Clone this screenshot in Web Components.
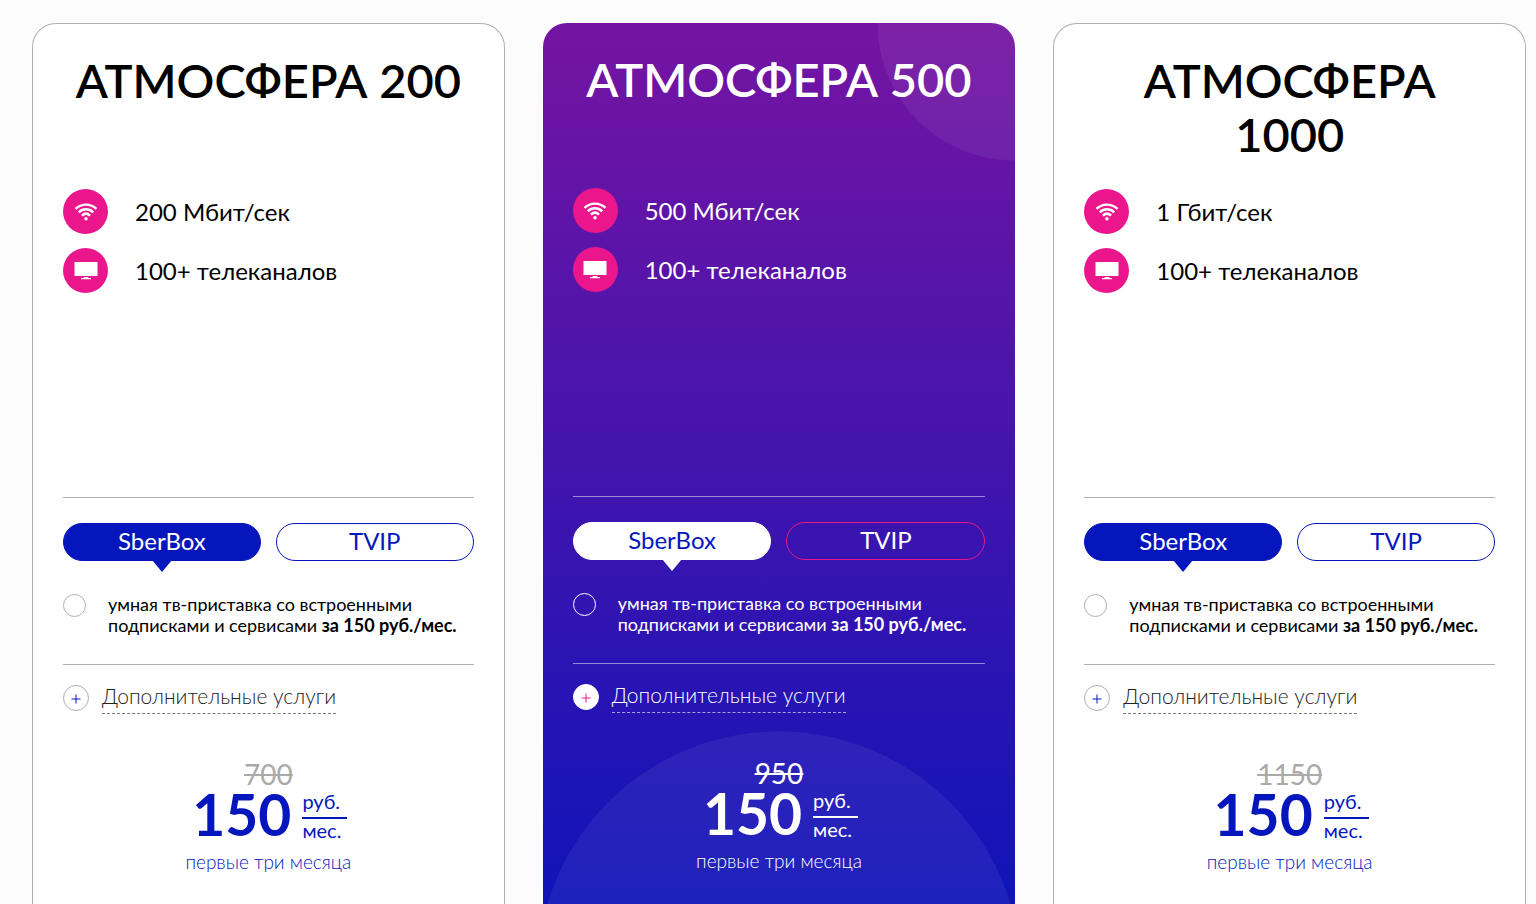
<!DOCTYPE html>
<html lang="ru">
<head>
<meta charset="utf-8">
<meta name="viewport" content="width=device-width, initial-scale=1">
<title>Тарифы «Атмосфера»</title>
<style>
  html { scrollbar-width: none; }
  body { margin: 0; background: #fcfcfc; font-family: Lato, "Open Sans", sans-serif; color: #000; }
</style>
</head>
<body>
<tariff-list>
  <tariff-card>
    <span slot="title">АТМОСФЕРА 200</span>
    <tariff-feature icon="wifi">200 Мбит/сек</tariff-feature>
    <tariff-feature icon="tv">100+ телеканалов</tariff-feature>
    <tariff-price slot="price" old="700" now="150">первые три месяца</tariff-price>
  </tariff-card>
  <tariff-card featured>
    <span slot="title">АТМОСФЕРА 500</span>
    <tariff-feature icon="wifi">500 Мбит/сек</tariff-feature>
    <tariff-feature icon="tv">100+ телеканалов</tariff-feature>
    <tariff-price slot="price" old="950" now="150">первые три месяца</tariff-price>
  </tariff-card>
  <tariff-card>
    <span slot="title">АТМОСФЕРА 1000</span>
    <tariff-feature icon="wifi">1 Гбит/сек</tariff-feature>
    <tariff-feature icon="tv">100+ телеканалов</tariff-feature>
    <tariff-price slot="price" old="1150" now="150">первые три месяца</tariff-price>
  </tariff-card>
</tariff-list>

<template id="list-template">
  <style>
    :host { display: block; }
    main {
      box-sizing: border-box;
      display: grid;
      grid-template-columns: repeat(auto-fit, minmax(440px, 1fr));
      gap: 38px;
      min-height: 100vh;
      padding: 23px 10px 0 32px;
    }
  </style>
  <main><slot></slot></main>
</template>

<template id="card-template">
  <style>
    :host {
      --accent: #0517bc;
      --line: #afafaf;
      --ring: #afafaf;
      --tab-text: #fff;
      --tab-idle-text: #0517bc;
      --tab-idle-line: #0517bc;
      --extra-text: #222;
      --extra-line: #777;
      --plus: #0517bc;
      --price: #0517bc;
      --old-price: #aaa;
      display: block;
      min-width: 0;
    }
    :host([featured]) {
      --accent: #fff;
      --line: rgba(255, 255, 255, .5);
      --ring: #fff;
      --tab-text: #0517bc;
      --tab-idle-text: #fff;
      --tab-idle-line: #eb168c;
      --extra-text: #fff;
      --extra-line: rgba(255, 255, 255, .6);
      --plus: #eb168c;
      --price: #fff;
      --old-price: #fff;
      color: #fff;
    }
    article {
      box-sizing: border-box;
      height: 100%;
      padding: 29px 30px 20px;
      border: 1px solid #afafaf;
      border-bottom: 0;
      border-radius: 24px 24px 0 0;
      background: #fff;
    }
    :host([featured]) article {
      border: 0;
      background:
        radial-gradient(circle 138px at 100% 0, rgba(255, 255, 255, .06) 137px, transparent 138px),
        radial-gradient(circle 242px at 50% calc(100% + 69px), rgba(255, 255, 255, .06) 241px, transparent 242px),
        linear-gradient(#7514a2, #0f14b9);
    }
    h2 {
      margin: 0;
      padding: 0 8px;
      min-height: 109px;
      font-size: 47px;
      line-height: 54px;
      font-weight: 600;
      text-align: center;
    }
    .features {
      display: flex;
      flex-direction: column;
      gap: 14px;
      min-height: 308px;
      margin-top: 27px;
    }
    hr { margin: 0; border: 0; height: 1px; background: var(--line); }
    .tabs { display: grid; grid-template-columns: 1fr 1fr; gap: 15px; margin-top: 25px; }
    .tabs button {
      position: relative;
      height: 38px;
      padding: 0 0 2px;
      border: 1px solid var(--tab-idle-line);
      border-radius: 19px;
      background: none;
      color: var(--tab-idle-text);
      font: 400 24px/34px Lato, "Open Sans", sans-serif;
      cursor: pointer;
    }
    .tabs button[aria-selected="true"] {
      border-color: var(--accent);
      background: var(--accent);
      color: var(--tab-text);
    }
    .tabs button[aria-selected="true"]::after {
      content: "";
      position: absolute;
      left: 50%;
      top: 100%;
      margin-left: -10px;
      border: 10px solid transparent;
      border-top: 12px solid var(--accent);
      border-bottom: 0;
    }
    .option { display: flex; align-items: flex-start; gap: 22px; margin: 33px 0 28px; }
    .option input {
      appearance: none;
      flex: none;
      box-sizing: border-box;
      width: 23px;
      height: 23px;
      margin: 0;
      border: 1px solid var(--ring);
      border-radius: 50%;
    }
    .option input:checked { background: var(--accent); }
    .option label { font-size: 18px; line-height: 21px; }
    .option b { font-weight: 700; }
    .extra {
      display: flex;
      gap: 13px;
      margin-top: 20px;
      padding: 0;
      border: 0;
      background: none;
      color: var(--extra-text);
      font: 300 21px/22px Lato, "Open Sans", sans-serif;
      cursor: pointer;
    }
    .extra i {
      box-sizing: border-box;
      display: grid;
      place-items: center;
      width: 26px;
      height: 26px;
      border: 1px solid var(--ring);
      border-radius: 50%;
      background: #fff;
      color: var(--plus);
    }
    .extra svg { display: block; margin-top: 2px; }
    .extra span { padding-bottom: 6px; border-bottom: 1px dashed var(--extra-line); }
  </style>
  <article>
    <h2><slot name="title"></slot></h2>
    <div class="features"><slot></slot></div>
    <hr>
    <div class="tabs" role="tablist">
      <button type="button" role="tab" aria-selected="true">SberBox</button>
      <button type="button" role="tab" aria-selected="false">TVIP</button>
    </div>
    <div class="option">
      <input type="radio" id="box" name="box">
      <label for="box">умная тв-приставка со встроенными подписками и сервисами <b>за 150 руб./мес.</b></label>
    </div>
    <hr>
    <button type="button" class="extra">
      <i><svg width="10" height="10" viewBox="0 0 10 10" aria-hidden="true"><path d="M5 .5v9M.5 5h9" stroke="currentColor" fill="none"/></svg></i>
      <span>Дополнительные услуги</span>
    </button>
    <slot name="price"></slot>
  </article>
</template>

<template id="feature-template">
  <style>
    :host { display: flex; align-items: center; gap: 27px; font-size: 24px; line-height: 45px; }
    .badge {
      display: grid;
      place-items: center;
      width: 45px;
      height: 45px;
      border-radius: 50%;
      background: #eb168c;
    }
    svg { display: none; }
    :host([icon="wifi"]) .wifi, :host([icon="tv"]) .tv { display: block; }
  </style>
  <span class="badge">
    <svg class="wifi" width="24" height="20" viewBox="0 0 24 20" fill="none" stroke="#fff" stroke-width="2.4" aria-hidden="true">
      <path d="M1.500 6.800C7.600 1.200 16.400 1.200 22.500 6.800M4.700 10.300C9 6.300 15 6.300 19.300 10.300M7.900 13.600C10.400 11.200 13.600 11.200 16.100 13.600"/>
      <circle cx="12" cy="16.800" r="1.800" fill="#fff" stroke="none"/>
    </svg>
    <svg class="tv" width="24" height="20" viewBox="0 0 24 20" fill="#fff" aria-hidden="true">
      <path d="M.5 1h23v14h-23zM10 16h4l.5 1H17v1.300H7V17h2.500z"/>
    </svg>
  </span>
  <slot></slot>
</template>

<template id="price-template">
  <style>
    :host { display: block; margin-top: 46px; color: var(--price); text-align: center; }
    s { display: block; color: var(--old-price); font-size: 28px; line-height: 29px; }
    .now { display: flex; justify-content: center; gap: 11px; padding-left: 3px; }
    strong { font-size: 57px; line-height: 51px; font-weight: 700; }
    .unit { width: 45px; font-size: 20px; text-align: left; }
    .unit span { display: block; line-height: 22px; }
    .unit span:first-child { padding-bottom: 3px; border-bottom: 2px solid; line-height: 25px; }
    p { margin: 8px 0 0; font-size: 19px; line-height: 26px; font-weight: 300; }
  </style>
  <s></s>
  <div class="now">
    <strong></strong>
    <div class="unit"><span>руб.</span><span>мес.</span></div>
  </div>
  <p><slot></slot></p>
</template>

<script>
  class TemplateElement extends HTMLElement {
    constructor() {
      super();
      const template = document.getElementById(this.constructor.template);
      this.attachShadow({ mode: 'open' }).append(template.content.cloneNode(true));
    }
  }

  class TariffList extends TemplateElement {
    static template = 'list-template';
  }

  class TariffFeature extends TemplateElement {
    static template = 'feature-template';
  }

  class TariffCard extends TemplateElement {
    static template = 'card-template';
    connectedCallback() {
      const tabs = this.shadowRoot.querySelectorAll('.tabs button');
      tabs.forEach(tab => tab.addEventListener('click', () => {
        tabs.forEach(other => other.setAttribute('aria-selected', String(other === tab)));
      }));
    }
  }

  class TariffPrice extends TemplateElement {
    static template = 'price-template';
    connectedCallback() {
      this.shadowRoot.querySelector('s').textContent = this.getAttribute('old');
      this.shadowRoot.querySelector('strong').textContent = this.getAttribute('now');
    }
  }

  customElements.define('tariff-list', TariffList);
  customElements.define('tariff-feature', TariffFeature);
  customElements.define('tariff-card', TariffCard);
  customElements.define('tariff-price', TariffPrice);
</script>
</body>
</html>
